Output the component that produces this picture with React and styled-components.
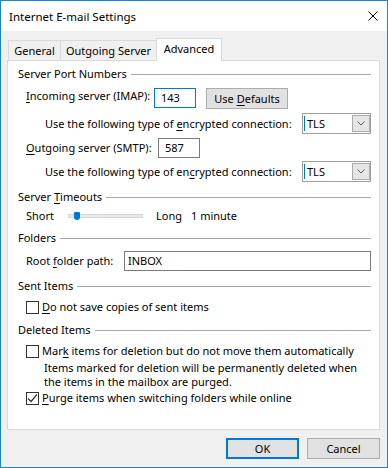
import React from 'react';
import styled, { createGlobalStyle } from 'styled-components';

const Global = createGlobalStyle`
  html, body { margin: 0; padding: 0; background: #fff; }
  body { font-family: "Noto Sans", "Segoe UI", sans-serif; font-size: 11px; color: #000; }
  * { box-sizing: border-box; }
`;

const Window = styled.div`
  width: 388px;
  height: 468px;
  border: 1px solid #1883d7;
  background: #f0f0f0;
  display: flex;
  flex-direction: column;
`;

const TitleBar = styled.div`
  height: 30px;
  flex-shrink: 0;
  background: #fff;
  display: flex;
  align-items: center;
  justify-content: space-between;
  padding: 0 9px 0 8px;
  font-size: 11.5px;
`;

const Body = styled.div`
  padding-top: 7px;
  display: flex;
  flex-direction: column;
`;

const TabRow = styled.div`
  display: flex;
  align-items: flex-end;
  margin-left: 7px;
  margin-bottom: -1px;
  position: relative;
  z-index: 1;
  height: 23px;
`;

const Tab = styled.div`
  width: ${p => p.$w}px;
  height: ${p => (p.$active ? 23 : 20)}px;
  margin-bottom: ${p => (p.$active ? 0 : 1)}px;
  margin-left: ${p => (p.$first ? 0 : -1)}px;
  border: 1px solid #d9d9d9;
  border-bottom: none;
  background: ${p => (p.$active ? '#fff' : '#f0f0f0')};
  display: flex;
  align-items: center;
  justify-content: center;
  padding-bottom: ${p => (p.$active ? 3 : 0)}px;
  line-height: 16px;
`;

const Panel = styled.div`
  margin-left: 6px;
  width: 373px;
  height: 370px;
  background: #fff;
  border: 1px solid #d9d9d9;
  padding: 0 8px 0 10px;
  display: flex;
  flex-direction: column;
`;

const Row = styled.div`
  display: flex;
  align-items: ${p => p.$align || 'center'};
  height: ${p => p.$h}px;
  margin-top: ${p => p.$mt}px;
  padding-left: ${p => p.$indent || 0}px;
  line-height: 16px;
  flex-shrink: 0;
`;

const HeaderRow = styled(Row)`
  gap: 4px;
  &::after {
    content: '';
    flex: 1;
    height: 1px;
    background: #a9a9a9;
    margin-top: 1px;
  }
`;

const Label = styled.span`
  display: inline-block;
  width: ${p => (p.$w ? `${p.$w}px` : 'auto')};
  flex-shrink: 0;
  white-space: nowrap;
`;

const Key = styled.span`
  text-decoration: underline;
  text-underline-offset: 2px;
`;

const TextBox = styled.div`
  width: ${p => p.$w}px;
  height: 20px;
  border: 1px solid ${p => (p.$focus ? '#0078d7' : '#7a7a7a')};
  background: #fff;
  display: flex;
  align-items: center;
  padding-left: ${p => p.$pl || 6}px;
  flex-shrink: 0;
`;

const Button = styled.div`
  width: ${p => p.$w}px;
  height: 21px;
  margin-left: ${p => p.$ml || 0}px;
  background: #e1e1e1;
  border: 1px solid ${p => (p.$default ? '#0078d7' : '#adadad')};
  box-shadow: ${p => (p.$default ? 'inset 0 0 0 1px #0078d7' : 'none')};
  display: flex;
  align-items: center;
  justify-content: center;
  flex-shrink: 0;
  white-space: nowrap;
`;

const Select = styled.div`
  margin-left: auto;
  width: 69px;
  height: 21px;
  border: 1px solid #a0a0a0;
  background: #fff;
  display: flex;
  align-items: center;
  padding: 1px 0 1px 1px;
`;

const Caret = styled.span`
  width: 1px;
  height: 15px;
  background: #0078d7;
  margin-right: 2px;
`;

const SelectText = styled.span`
  flex: 1;
`;

const DropButton = styled.div`
  width: 18px;
  height: 17px;
  background: #e5e5e5;
  border: 1px solid #acacac;
  display: flex;
  align-items: center;
  justify-content: center;
`;

const Track = styled.div`
  position: relative;
  width: 75px;
  height: 4px;
  background: #e7eaea;
  border: 1px solid #d6d6d6;
  margin-right: 13px;
  flex-shrink: 0;
`;

const Thumb = styled.div`
  position: absolute;
  left: 5px;
  top: -3px;
  width: 6px;
  height: 8px;
  background: #0078d7;
  border-radius: 1px 1px 3px 3px;
`;

const Check = styled.div`
  width: 13px;
  height: 13px;
  border: 1px solid #333;
  background: #fff;
  margin-right: 3px;
  flex-shrink: 0;
  display: flex;
  align-items: center;
  justify-content: center;
`;

const Desc = styled.div`
  margin-top: 2px;
  padding-left: 26px;
  line-height: 14px;
  height: 28px;
  flex-shrink: 0;
`;

const Footer = styled.div`
  display: flex;
  justify-content: flex-end;
  gap: 8px;
  margin-top: 8px;
  padding-right: 7px;
`;

const CloseIcon = () => (
  <svg width="10" height="10" viewBox="0 0 10 10">
    <path d="M0.5 0.5 L9.5 9.5 M9.5 0.5 L0.5 9.5" stroke="#000" strokeWidth="1" fill="none" />
  </svg>
);

const Chevron = () => (
  <svg width="8" height="5" viewBox="0 0 8 5">
    <polyline points="0.5,0.5 4,4 7.5,0.5" stroke="#606060" strokeWidth="1" fill="none" />
  </svg>
);

const Tick = () => (
  <svg width="11" height="11" viewBox="0 0 11 11">
    <polyline points="1,5.5 4,8.5 10,1.5" stroke="#333" strokeWidth="1.2" fill="none" />
  </svg>
);

const Header = ({ mt, children }) => (
  <HeaderRow $h={16} $mt={mt}>
    <Label>{children}</Label>
  </HeaderRow>
);

const EncRow = ({ mt, children }) => (
  <Row $h={21} $mt={mt} $indent={27}>
    <Label>{children}</Label>
    <Select>
      <Caret />
      <SelectText>TLS</SelectText>
      <DropButton><Chevron /></DropButton>
    </Select>
  </Row>
);

const CheckRow = ({ mt, checked, children }) => (
  <Row $h={16} $mt={mt} $indent={8}>
    <Check>{checked && <Tick />}</Check>
    <Label>{children}</Label>
  </Row>
);

export default function App() {
  return (
    <>
      <Global />
      <Window>
        <TitleBar>
          <span>Internet E-mail Settings</span>
          <CloseIcon />
        </TitleBar>
        <Body>
          <TabRow>
            <Tab $w={53} $first>General</Tab>
            <Tab $w={97}>Outgoing Server</Tab>
            <Tab $w={66} $active>Advanced</Tab>
          </TabRow>
          <Panel>
            <Header mt={5}>Server Port Numbers</Header>
            <Row $h={21} $mt={6} $indent={8} $align="flex-start">
              <Label $w={128}><Key>I</Key>ncoming server (IMAP):</Label>
              <TextBox $w={42} $focus>143</TextBox>
              <Button $w={82} $ml={10}><span>Use <Key>D</Key>efaults</span></Button>
            </Row>
            <EncRow mt={4}>Use the following type of <Key>e</Key>ncrypted connection:</EncRow>
            <Row $h={20} $mt={4} $indent={8}>
              <Label $w={132}><Key>O</Key>utgoing server (SMTP):</Label>
              <TextBox $w={42}>587</TextBox>
            </Row>
            <EncRow mt={3}>Use the following type of en<Key>c</Key>rypted connection:</EncRow>

            <Header mt={7}>Server <Key>T</Key>imeouts</Header>
            <Row $h={16} $mt={3} $indent={8}>
              <Label $w={42}>Short</Label>
              <Track><Thumb /></Track>
              <Label $w={35}>Long</Label>
              <Label>1 minute</Label>
            </Row>

            <Header mt={6}>Folders</Header>
            <Row $h={20} $mt={5} $indent={8}>
              <Label $w={98}>Root <Key>f</Key>older path:</Label>
              <TextBox $w={247} $pl={3}>INBOX</TextBox>
            </Row>

            <Header mt={7}>Sent Items</Header>
            <CheckRow mt={5}><Key>D</Key>o not save copies of sent items</CheckRow>

            <Header mt={7}>Deleted Items</Header>
            <CheckRow mt={5}>Mar<Key>k</Key> items for deletion but do not move them automatically</CheckRow>
            <Desc>
              Items marked for deletion will be permanently deleted when<br />
              the items in the mailbox are purged.
            </Desc>
            <CheckRow mt={1} checked><Key>P</Key>urge items when switching folders while online</CheckRow>
          </Panel>
          <Footer>
            <Button $w={73} $default>OK</Button>
            <Button $w={73}>Cancel</Button>
          </Footer>
        </Body>
      </Window>
    </>
  );
}
